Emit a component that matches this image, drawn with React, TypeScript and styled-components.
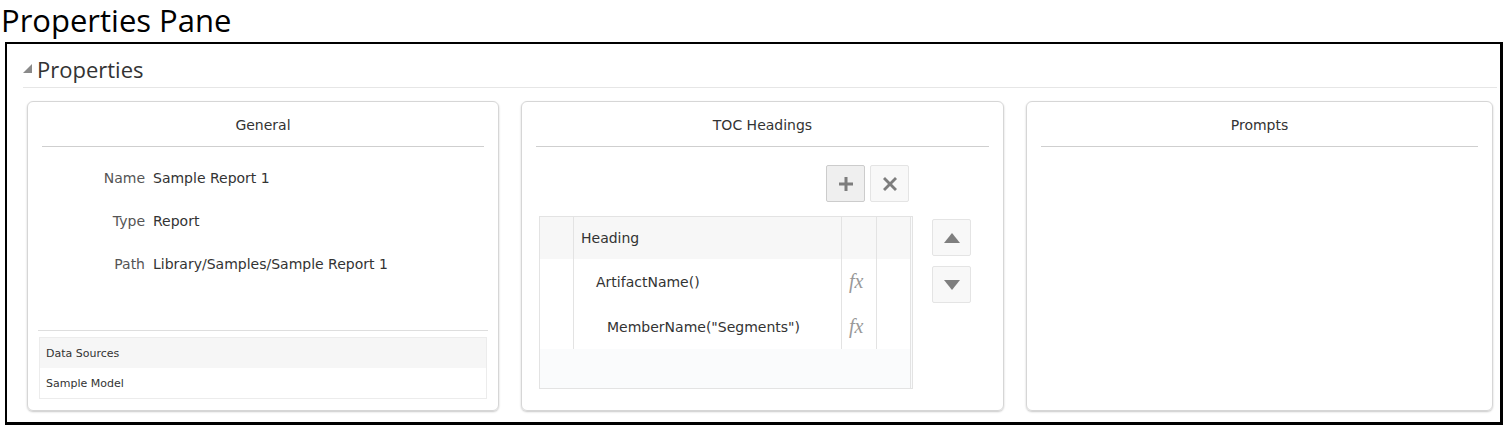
import { Fragment } from 'react'
import styled, { createGlobalStyle } from 'styled-components'

const GlobalStyle = createGlobalStyle`
    body {
        margin: 0;
        background: #fff;
        font-family: 'DejaVu Sans', sans-serif;
    }
`

const Page = styled.div`
    width: 1511px;
    height: 434px;
    overflow: hidden;
`

const Title = styled.h1`
    margin: 0 0 1px;
    padding-left: 1px;
    font-family: 'Open Sans', sans-serif;
    font-weight: 400;
    font-size: 31px;
    line-height: 41px;
    color: #000;
`

const Frame = styled.section`
    margin-left: 5px;
    width: 1498px;
    height: 383px;
    box-sizing: border-box;
    border: 2px solid #000;
    border-right-width: 3px;
    border-bottom-width: 3px;
    padding: 0 3px 0 16px;
`

const Disclosure = styled.div`
    display: flex;
    align-items: center;
    gap: 5px;
    height: 44px;
    border-bottom: 1px solid #e6e6e6;
    font-family: 'Open Sans', sans-serif;
    font-size: 22px;
    color: #333;
    padding-top: 6px;
    box-sizing: border-box;
`

const Cards = styled.div`
    display: flex;
    gap: 22px;
    margin: 13px 0 0 4px;
    height: 310px;
`

const Card = styled.div<{ $w: number }>`
    width: ${p => p.$w}px;
    box-sizing: border-box;
    border: 1px solid #d6d6d6;
    border-radius: 6px;
    box-shadow: 0 1px 2px rgba(0, 0, 0, 0.22);
    display: flex;
    flex-direction: column;
    padding: 0 14px;
`

const CardTitle = styled.div`
    height: 45px;
    border-bottom: 1px solid #cfcfcf;
    display: flex;
    align-items: center;
    justify-content: center;
    font-size: 14px;
    color: #333;
    padding-top: 2px;
    box-sizing: border-box;
`

const Fields = styled.div`
    display: grid;
    grid-template-columns: 103px 1fr;
    column-gap: 8px;
    margin-top: 9px;
    flex: 1;
    align-content: start;
`

const Label = styled.div`
    height: 43px;
    display: flex;
    align-items: center;
    justify-content: flex-end;
    color: #555;
    font-size: 14px;
`

const Value = styled.div`
    height: 43px;
    display: flex;
    align-items: center;
    color: #333;
    font-size: 14px;
`

const Sources = styled.div`
    margin: 0 -4px 11px;
    border-top: 1px solid #dedede;
    padding-top: 6px;
`

const SourceTable = styled.div`
    border: 1px solid #ececec;
    margin: 0 1px;
`

const SourceRow = styled.div<{ $head?: boolean }>`
    height: 30px;
    display: flex;
    align-items: center;
    padding-left: 6px;
    font-size: 11px;
    color: #333;
    background: ${p => (p.$head ? '#f6f6f6' : '#fff')};
`

const TocBody = styled.div`
    display: flex;
    gap: 19px;
    padding-left: 3px;
    margin-top: 18px;
`

const TocMain = styled.div`
    width: 374px;
    display: flex;
    flex-direction: column;
`

const Toolbar = styled.div`
    display: flex;
    justify-content: flex-end;
    gap: 5px;
    padding-right: 4px;
    margin-bottom: 13px;
`

const IconButton = styled.button<{ $pressed?: boolean }>`
    width: 39px;
    height: 37px;
    box-sizing: border-box;
    border: 1px solid ${p => (p.$pressed ? '#cccccc' : '#e4e4e4')};
    border-radius: 2px;
    background: ${p => (p.$pressed ? '#efefef' : '#f8f8f8')};
    display: flex;
    align-items: center;
    justify-content: center;
    padding: 0;
`

const Grid = styled.div`
    height: 173px;
    margin-top: 1px;
    box-sizing: border-box;
    border: 1px solid #e3e3e3;
    border-right: 3px double #e3e3e3;
    background: #fafbfc;
`

const GridRow = styled.div<{ $head?: boolean; $h: number }>`
    display: grid;
    grid-template-columns: 33px 268px 35px 1fr;
    height: ${p => p.$h}px;
    background: ${p => (p.$head ? '#f7f7f7' : '#fff')};
`

const Cell = styled.div<{ $indent?: number; $line?: boolean }>`
    display: flex;
    align-items: center;
    padding-left: ${p => p.$indent ?? 0}px;
    border-left: ${p => (p.$line ? '1px solid #e3e3e3' : 'none')};
    font-size: 14px;
    color: #333;
    white-space: nowrap;
`

const Fx = styled.span`
    font-family: 'Liberation Serif', serif;
    font-style: italic;
    font-size: 20px;
    color: #999;
    padding-left: 7px;
`

const MoveButtons = styled.div`
    display: flex;
    flex-direction: column;
    gap: 10px;
    padding-top: 54px;
`

const PlusIcon = () => (
    <svg width="14" height="14" viewBox="0 0 14 14">
        <path d="M5.5 0h3v5.5H14v3H8.5V14h-3V8.5H0v-3h5.5z" fill="#7d7d7d" />
    </svg>
)

const CrossIcon = () => (
    <svg width="14" height="14" viewBox="0 0 14 14">
        <path d="M2 0l5 5 5-5 2 2-5 5 5 5-2 2-5-5-5 5-2-2 5-5-5-5z" fill="#7d7d7d" />
    </svg>
)

const Triangle = ({ down }: { down?: boolean }) => (
    <svg width="16" height="12" viewBox="0 0 16 12">
        <path d={down ? 'M0 1h16L8 11z' : 'M8 1l8 10H0z'} fill="#7f7f7f" />
    </svg>
)

const fields = [
    ['Name', 'Sample Report 1'],
    ['Type', 'Report'],
    ['Path', 'Library/Samples/Sample Report 1'],
]

const headings = [
    { text: 'ArtifactName()', indent: 22 },
    { text: 'MemberName("Segments")', indent: 33 },
]

function App() {
    return (
        <Page>
            <GlobalStyle />
            <Title>Properties Pane</Title>
            <Frame>
                <Disclosure>
                    <svg width="9" height="9" viewBox="0 0 9 9">
                        <path d="M9 0v9H0z" fill="#8a8a8a" />
                    </svg>
                    Properties
                </Disclosure>
                <Cards>
                    <Card $w={472}>
                        <CardTitle>General</CardTitle>
                        <Fields>
                            {fields.map(([k, v]) => (
                                <Fragment key={k}>
                                    <Label>{k}</Label>
                                    <Value>{v}</Value>
                                </Fragment>
                            ))}
                        </Fields>
                        <Sources>
                            <SourceTable>
                                <SourceRow $head>Data Sources</SourceRow>
                                <SourceRow>Sample Model</SourceRow>
                            </SourceTable>
                        </Sources>
                    </Card>
                    <Card $w={483}>
                        <CardTitle>TOC Headings</CardTitle>
                        <TocBody>
                            <TocMain>
                                <Toolbar>
                                    <IconButton $pressed>
                                        <PlusIcon />
                                    </IconButton>
                                    <IconButton>
                                        <CrossIcon />
                                    </IconButton>
                                </Toolbar>
                                <Grid>
                                    <GridRow $head $h={42}>
                                        <Cell />
                                        <Cell $line $indent={7}>
                                            Heading
                                        </Cell>
                                        <Cell $line />
                                        <Cell $line />
                                    </GridRow>
                                    {headings.map(h => (
                                        <GridRow key={h.text} $h={45}>
                                            <Cell />
                                            <Cell $line $indent={h.indent}>
                                                {h.text}
                                            </Cell>
                                            <Cell $line>
                                                <Fx>fx</Fx>
                                            </Cell>
                                            <Cell $line />
                                        </GridRow>
                                    ))}
                                </Grid>
                            </TocMain>
                            <MoveButtons>
                                <IconButton>
                                    <Triangle />
                                </IconButton>
                                <IconButton>
                                    <Triangle down />
                                </IconButton>
                            </MoveButtons>
                        </TocBody>
                    </Card>
                    <Card $w={467}>
                        <CardTitle>Prompts</CardTitle>
                    </Card>
                </Cards>
            </Frame>
        </Page>
    )
}

export default App
